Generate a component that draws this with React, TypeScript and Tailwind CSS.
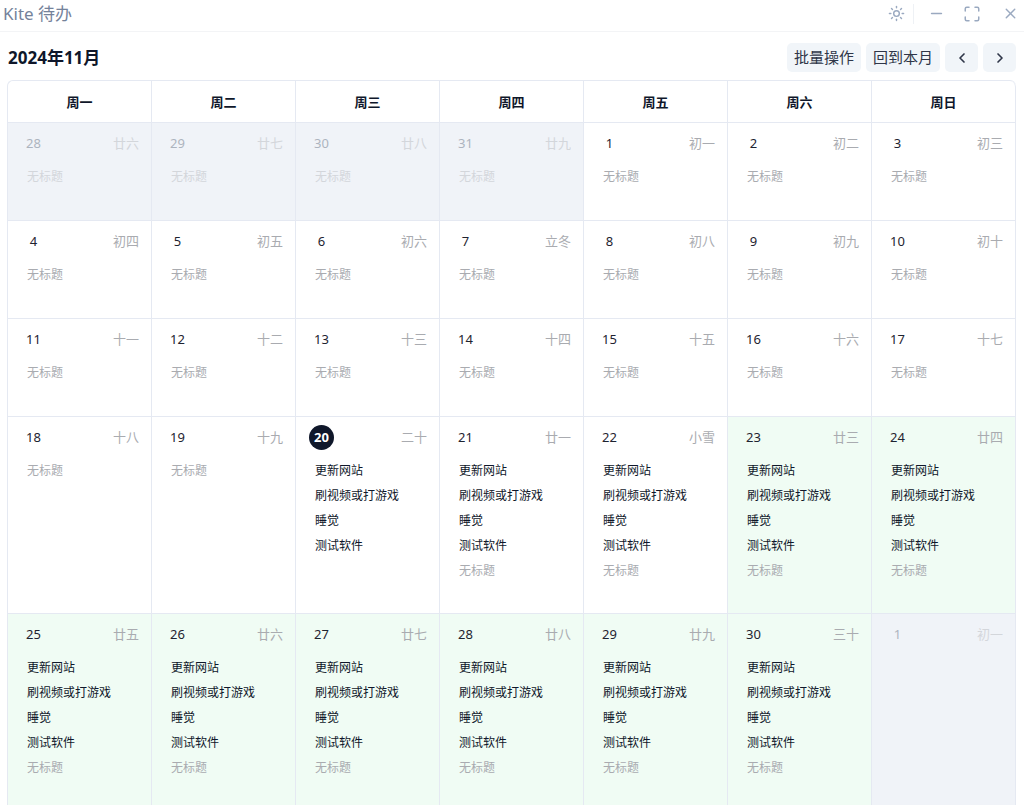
import React from "react";
import { ChevronLeft, ChevronRight, Maximize, Minus, Sun, X } from "lucide-react";

type Tone = "plain" | "outside" | "done";

interface Day {
  date: number;
  lunar: string;
  tone: Tone;
  tasks: string[];
  today?: boolean;
}

const UNTITLED = "无标题";
const ROUTINE = ["更新网站", "刷视频或打游戏", "睡觉", "测试软件"];
const FULL = [...ROUTINE, UNTITLED];
const WEEKDAYS = ["周一", "周二", "周三", "周四", "周五", "周六", "周日"];

const LUNAR = [
  "廿六", "廿七", "廿八", "廿九", "初一", "初二", "初三",
  "初四", "初五", "初六", "立冬", "初八", "初九", "初十",
  "十一", "十二", "十三", "十四", "十五", "十六", "十七",
  "十八", "十九", "二十", "廿一", "小雪", "廿三", "廿四",
  "廿五", "廿六", "廿七", "廿八", "廿九", "三十", "初一",
];

const DAYS: Day[] = LUNAR.map((lunar, i) => {
  const n = i - 3;
  if (n < 1) return { date: n + 31, lunar, tone: "outside", tasks: [UNTITLED] };
  if (n > 30) return { date: n - 30, lunar, tone: "outside", tasks: [] };
  if (n < 20) return { date: n, lunar, tone: "plain", tasks: [UNTITLED] };
  if (n === 20) return { date: n, lunar, tone: "plain", tasks: ROUTINE, today: true };
  return { date: n, lunar, tone: n < 23 ? "plain" : "done", tasks: FULL };
});

const WEEKS = [0, 1, 2, 3, 4].map((w) => DAYS.slice(w * 7, w * 7 + 7));

const TONES: Record<Tone, string> = {
  plain: "bg-white",
  outside: "bg-[#f0f3f8]",
  done: "bg-[#f0fcf4]",
};

function DayCell({ day }: { day: Day }) {
  const outside = day.tone === "outside";
  return (
    <td className={`border-r border-b border-[#e5e9f2] p-0 align-top ${TONES[day.tone]}`}>
      <div className={`pt-2 pr-3 pb-[30px] pl-[13px] ${outside ? "opacity-40" : ""}`}>
        <div className="flex items-center justify-between">
          <span
            className={`flex size-[25px] items-center justify-center rounded-full text-[13px] ${
              day.today ? "bg-[#0f172a] font-bold text-white" : outside ? "text-[#475569]" : "text-[#1e2330]"
            }`}
          >
            {day.date}
          </span>
          <span className="text-[13px] text-[#a9abb0]">{day.lunar}</span>
        </div>
        <ul className="mt-2 pl-[6px] text-[12px] leading-[25px] whitespace-nowrap">
          {day.tasks.map((task) => (
            <li key={task} className={task === UNTITLED ? "text-[#a9abb0]" : "text-[#0f172a]"}>
              {task}
            </li>
          ))}
        </ul>
      </div>
    </td>
  );
}

const ACTION = "flex h-[29px] items-center justify-center rounded-[5px] bg-[#f1f5f9] text-[#2f3648]";

export default function App() {
  return (
    <div className="flex h-screen flex-col overflow-hidden bg-white font-['Noto_Sans','Noto_Sans_CJK_SC',sans-serif] text-[#0f172a]">
      <header className="flex h-8 shrink-0 items-center justify-between border-b border-[#f3f4f6] pr-1 pb-1 pl-[3px]">
        <span className="text-[17px] leading-6 text-[#74829a]">Kite 待办</span>
        <div className="flex items-center text-[#9aa9c0]">
          <button aria-label="切换主题" className="flex w-[25px] justify-center">
            <Sun size={17} strokeWidth={2} />
          </button>
          <span className="ml-1 h-5 w-px bg-[#eef1f5]" />
          <button aria-label="最小化" className="ml-2 flex w-7 justify-center">
            <Minus size={17} strokeWidth={2} />
          </button>
          <button aria-label="最大化" className="ml-2 flex w-7 justify-center">
            <Maximize size={18} strokeWidth={2} />
          </button>
          <button aria-label="关闭" className="ml-[14px] flex w-5 justify-center">
            <X size={17} strokeWidth={2} />
          </button>
        </div>
      </header>

      <main className="shrink-0 pt-[11px] pr-2 pl-[7px]">
        <div className="flex items-center justify-between pl-px">
          <h1 className="text-[17px] leading-[29px] font-bold">2024年11月</h1>
          <div className="flex gap-[5px] text-[15px]">
            <button className={`${ACTION} px-[7px]`}>批量操作</button>
            <button className={`${ACTION} px-[7px]`}>回到本月</button>
            <button aria-label="上个月" className={`${ACTION} w-[33px]`}>
              <ChevronLeft size={16} strokeWidth={2.5} />
            </button>
            <button aria-label="下个月" className={`${ACTION} w-[33px]`}>
              <ChevronRight size={16} strokeWidth={2.5} />
            </button>
          </div>
        </div>

        <div className="mt-2 overflow-hidden rounded-t-[6px] border-t border-l border-[#e5e9f2]">
          <table className="w-full table-fixed border-separate border-spacing-0">
            <thead>
              <tr>
                {WEEKDAYS.map((name) => (
                  <th
                    key={name}
                    scope="col"
                    className="h-[42px] border-r border-b border-[#e5e9f2] p-0 text-[13px] leading-5 font-bold last:rounded-tr-[6px]"
                  >
                    {name}
                  </th>
                ))}
              </tr>
            </thead>
            <tbody>
              {WEEKS.map((week, w) => (
                <tr key={w} className="h-[98px]">
                  {week.map((day) => (
                    <DayCell key={day.lunar + day.date} day={day} />
                  ))}
                </tr>
              ))}
            </tbody>
          </table>
        </div>
      </main>
    </div>
  );
}
